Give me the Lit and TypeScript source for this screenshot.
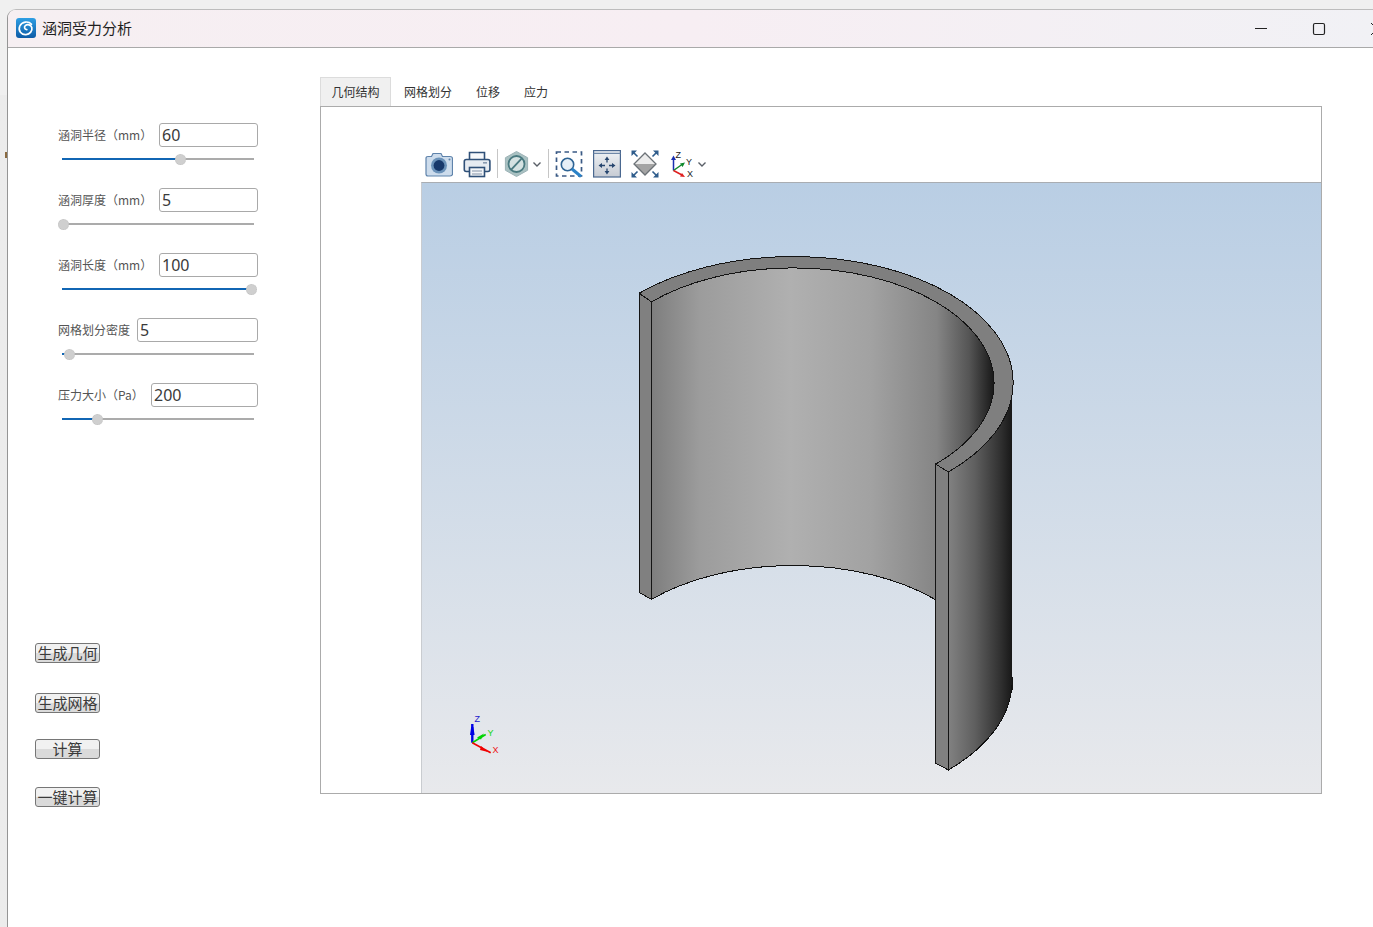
import { LitElement, html, css, svg } from "lit";
import { customElement } from "lit/decorators.js";

const rows = [
  { label: "涵洞半径（mm）", value: "60", input: 99, pos: 118 },
  { label: "涵洞厚度（mm）", value: "5", input: 99, pos: 1 },
  { label: "涵洞长度（mm）", value: "100", input: 99, pos: 189 },
  { label: "网格划分密度", value: "5", input: 121, pos: 7 },
  { label: "压力大小（Pa）", value: "200", input: 107, pos: 35 },
];
const actions = ["生成几何", "生成网格", "计算", "一键计算"];
const tabs = ["几何结构", "网格划分", "位移", "应力"];

const chevron = html`<svg class="chev" viewBox="0 0 10 28"><polyline points="1.5,12.5 5,16 8.5,12.5" fill="none" stroke="#5a6068" stroke-width="1.4"/></svg>`;

@customElement("app-root")
export class AppRoot extends LitElement {
  static styles = css`
    :host {
      display: block;
      width: 1373px;
      height: 927px;
      overflow: hidden;
      font-family: "Noto Sans CJK SC", "Noto Sans", sans-serif;
      background:
        linear-gradient(#8a6a40, #8a6a40) 5px 152px / 2px 6px no-repeat,
        linear-gradient(#f0f0f0, #f0f0f0) 0 0 / 100% 95px no-repeat,
        linear-gradient(to right, #ececec, #cfcfcf);
    }
    .window {
      margin: 9px 0 0 7px;
      height: 918px;
      box-sizing: border-box;
      background: #fff;
      border-top: 1px solid #bdbdbd;
      border-left: 1px solid #959595;
      border-top-left-radius: 9px;
      display: flex;
      flex-direction: column;
      overflow: hidden;
    }
    .title {
      height: 37px;
      flex: none;
      display: flex;
      align-items: center;
      padding-left: 8px;
      overflow: hidden;
      border-bottom: 1px solid #a9a9a9;
      background: linear-gradient(90deg, #f6eff2, #f7eef3 50%, #f1f1f5);
      font-size: 15px;
      color: #1f1f1f;
    }
    .title span { margin-bottom: 3px; }
    .logo { width: 20px; height: 20px; margin: 0 6px 1px 0; flex: none; }
    .controls { margin-left: auto; margin-right: -33px; display: flex; flex: none; }
    .controls svg { width: 58px; height: 14px; display: block; }
    .body { flex: 1; display: flex; }
    .left { width: 312px; flex: none; padding: 75px 0 0 50px; box-sizing: border-box; }
    .row { width: 200px; height: 65px; }
    .field { display: flex; justify-content: space-between; align-items: center; height: 24px; }
    .field label { font-size: 12px; color: #555; white-space: nowrap; line-height: 24px; }
    .field input {
      height: 24px;
      box-sizing: border-box;
      border: 1px solid #a9a9a9;
      border-radius: 3px;
      padding: 0 2px;
      font: 16px "Noto Sans", sans-serif;
      color: #3a3a3a;
      outline: none;
      background: #fff;
    }
    .slider { position: relative; width: 192px; height: 2px; margin: 11px 0 0 4px; background: #ababab; }
    .fill { position: absolute; left: 0; top: 0; height: 2px; background: #1166b4; }
    .thumb {
      position: absolute;
      top: -4px;
      width: 9px;
      height: 9px;
      margin-left: -5px;
      border-radius: 50%;
      background: #cfcfcf;
      border: 1px dotted #c2c2c2;
      box-sizing: content-box;
    }
    .actions { margin: 195px 0 0 -23px; display: flex; flex-direction: column; align-items: flex-start; }
    .actions button {
      width: 65px;
      height: 20px;
      padding: 0;
      box-sizing: border-box;
      border: 1px solid #767676;
      border-radius: 3px;
      background: linear-gradient(#f1f1f1 0 50%, #dadada 50% 100%);
      font: 15px/16px "Noto Sans CJK SC", sans-serif;
      color: #3a3a3a;
      white-space: nowrap;
      overflow: hidden;
    }
    .actions button:nth-child(2) { margin-top: 30px; }
    .actions button:nth-child(3) { margin-top: 26px; }
    .actions button:nth-child(4) { margin-top: 28px; }
    .right { width: 1002px; flex: none; padding-top: 29px; }
    .tabs { display: flex; height: 29px; }
    .tab { width: 72px; box-sizing: border-box; font-size: 12px; color: #333; text-align: center; line-height: 30px; }
    .tab.short { width: 48px; }
    .tab.active { width: 71px; margin-right: 1px; background: #f0f0f0; border: 1px solid #dcdcdc; border-bottom: none; line-height: 28px; }
    .panel {
      height: 688px;
      box-sizing: border-box;
      border: 1px solid #ababab;
      display: flex;
      flex-direction: column;
    }
    .tools { height: 75px; box-sizing: border-box; padding: 0 0 4px 104px; display: flex; align-items: flex-end; gap: 6px; flex: none; }
    .group { display: flex; gap: 10px; align-items: flex-end; }
    .group.tight { gap: 3px; }
    .group.none { gap: 0; }
    .ic { width: 28px; height: 28px; display: block; }
    .ic.hex { width: 25px; }
    .chev { width: 10px; height: 28px; display: block; }
    .sep { width: 1px; height: 29px; background: #c6c6c6; }
    .view { margin-left: 100px; flex: 1; border-left: 1px solid #c9ccd0; border-top: 1px solid #a9adb2; min-height: 0; }
    .view svg { display: block; width: 100%; height: 100%; }
    .lbl { font: 9px "Liberation Sans", sans-serif; }
  `;

  private part() {
    const ia = "200.3 115";
    const oa = "219.3 126";
    return svg`
      <g shape-rendering="crispEdges">
        <path d="M651.3 301.9A${ia} 0 1 1 935.7 464.2V599.7A${ia} 0 0 0 651.3 599.4Z" fill="url(#gi)"/>
        <path d="M948.3 472A${oa} 0 0 0 1012.3 383V680.5A${oa} 0 0 1 948.3 770Z" fill="url(#go)"/>
        <path d="M651.3 599.4A${ia} 0 0 1 935.7 599.7" fill="none" stroke="#111"/>
        <path d="M948.3 770A${oa} 0 0 0 1012 685" fill="none" stroke="#111"/>
        <path d="M639.3 293.1A${oa} 0 1 1 948.3 472L935.7 464.2A${ia} 0 1 0 651.3 301.9Z" fill="#7f7f7f" stroke="#141414"/>
        <path d="M639.5 293.5L651.5 301.9V599.4L639.5 592.7Z" fill="#808080" stroke="#141414"/>
        <path d="M935.7 464.2L948.5 472V770L935.7 763.3Z" fill="#808080" stroke="#141414"/>
        <path d="M1012.4 677V690" stroke="#141414" fill="none"/>
      </g>`;
  }

  private triad() {
    return svg`
      <line x1="472.3" y1="742.7" x2="472.3" y2="724" stroke="#0000e6" stroke-width="2.4"/>
      <path d="M470 735L474.6 735L473.4 727L471.2 727Z" fill="#0000e6"/>
      <line x1="472.3" y1="742.7" x2="485.7" y2="734.5" stroke="#00d400" stroke-width="1.6"/>
      <path d="M477 737.6L484 733.6L481 739.5Z" fill="#00d400"/>
      <line x1="472.3" y1="742.7" x2="490.7" y2="752.7" stroke="#f00000" stroke-width="1.6"/>
      <path d="M481 746L488 752L480 750Z" fill="#f00000"/>
      <text class="lbl" x="474.5" y="722" fill="#1a1acc">Z</text>
      <text class="lbl" x="487.5" y="735.5" fill="#10d810">Y</text>
      <text class="lbl" x="492.5" y="753" fill="#ee1111">X</text>`;
  }

  render() {
    return html`
      <div class="window">
        <div class="title">
          <svg class="logo" viewBox="0 0 20 20">
            <defs><linearGradient id="lg" x1="0" y1="0" x2="0" y2="1"><stop offset="0" stop-color="#2f9fe4"/><stop offset="1" stop-color="#0d5ba6"/></linearGradient></defs>
            <rect width="20" height="20" rx="3" fill="url(#lg)"/>
            <path d="M15.5 6.2C12.5 2.8 6 3.4 3.8 8C1.8 12.6 5.4 17 10 16.6C14 16.2 16.6 12.8 15.8 9.6C15 6.8 11.6 6 9.6 7.4C7.8 8.8 8.4 11.4 10.8 11.6" fill="none" stroke="#fff" stroke-width="1.7" stroke-linecap="round"/>
          </svg>
          <span>涵洞受力分析</span>
          <div class="controls">
            <svg viewBox="0 0 58 14"><line x1="23" x2="35" y1="6.5" y2="6.5" stroke="#222" stroke-width="1"/></svg>
            <svg viewBox="0 0 58 14"><rect x="23.5" y="1.5" width="11" height="11" rx="1.5" fill="none" stroke="#222" stroke-width="1.2"/></svg>
            <svg viewBox="0 0 58 14"><path d="M23 1L35 13M35 1L23 13" fill="none" stroke="#222" stroke-width="1"/></svg>
          </div>
        </div>
        <div class="body">
          <div class="left">
            ${rows.map(
              (r) => html`
                <div class="row">
                  <div class="field">
                    <label>${r.label}</label>
                    <input .value=${r.value} style="width:${r.input}px" />
                  </div>
                  <div class="slider">
                    <div class="fill" style="width:${r.pos}px"></div>
                    <div class="thumb" style="left:${r.pos}px"></div>
                  </div>
                </div>
              `
            )}
            <div class="actions">${actions.map((a) => html`<button>${a}</button>`)}</div>
          </div>
          <div class="right">
            <div class="tabs">
              ${tabs.map((t, i) => html`<div class="tab ${i === 0 ? "active" : t.length === 2 ? "short" : ""}">${t}</div>`)}
            </div>
            <div class="panel">
              <div class="tools">
                <div class="group">
                  <svg class="ic" viewBox="0 0 28 28">
                    <path d="M1 8.5Q1 6.5 3 6.5H6.5L8 3.5H16L17.5 6.5H25Q27.5 6.5 27.5 8.5V24Q27.5 26 25 26H3Q1 26 1 24Z" fill="#cddcec" stroke="#5f83ab" stroke-width="1.2"/>
                    <circle cx="14" cy="15.5" r="8" fill="#6b92b9"/>
                    <circle cx="14" cy="15.5" r="5.4" fill="#17386b"/>
                    <circle cx="24.5" cy="9.5" r="1" fill="#5f83ab"/>
                  </svg>
                  <svg class="ic" viewBox="0 0 28 28">
                    <path d="M6.5 10V2.5H21.5V10" fill="#f6f8fb" stroke="#2f5078" stroke-width="1.6"/>
                    <rect x="1.3" y="9.5" width="25.6" height="12" rx="2" fill="#e6ebf1" stroke="#2f5078" stroke-width="1.6"/>
                    <rect x="20" y="12" width="4" height="1.6" fill="#8a9bb0"/>
                    <rect x="6.5" y="17.5" width="15" height="9" fill="#f3f5f8" stroke="#2f5078" stroke-width="1.6"/>
                    <path d="M9 21H19M9 24H19" stroke="#a9b4c2" stroke-width="1.3"/>
                  </svg>
                </div>
                <div class="sep"></div>
                <div class="group tight">
                  <svg class="ic hex" viewBox="0 0 25 28">
                    <path d="M12.5 1.5L23.6 7.7V20.3L12.5 26.5L1.4 20.3V7.7Z" fill="#a9c1c2" stroke="#9cb2b6"/>
                    <circle cx="12.5" cy="14" r="8" fill="#d5e2e2" stroke="#4a7a80" stroke-width="1.8"/>
                    <line x1="7" y1="19.8" x2="18" y2="8.2" stroke="#4a7a80" stroke-width="1.8"/>
                  </svg>
                  ${chevron}
                </div>
                <div class="sep"></div>
                <div class="group">
                  <svg class="ic" viewBox="0 0 28 28">
                    <rect x="1.5" y="2" width="25" height="24" fill="none" stroke="#3a5a85" stroke-width="1.7" stroke-dasharray="4.5 3.5"/>
                    <circle cx="12.5" cy="14.5" r="6.2" fill="#e6eff7" stroke="#2f6494" stroke-width="1.6"/>
                    <line x1="17" y1="19" x2="26" y2="26.5" stroke="#2a82c8" stroke-width="3"/>
                  </svg>
                  <svg class="ic" viewBox="0 0 28 28">
                    <defs><linearGradient id="fit" x1="0" y1="0" x2="0" y2="1"><stop offset="0" stop-color="#f0f3f6"/><stop offset="1" stop-color="#c6cbd3"/></linearGradient></defs>
                    <rect x="0.6" y="0.6" width="26.8" height="26.4" fill="url(#fit)" stroke="#4a6890" stroke-width="1.2"/>
                    <line x1="0.6" x2="27.4" y1="3.4" y2="3.4" stroke="#6f88a8" stroke-width="1.4"/>
                    <path d="M14 9V12.5M14 18.5V22M9 15.5H12M16 15.5H19" stroke="#27466f" stroke-width="1.3" fill="none"/>
                    <path d="M14 6.5L16.4 10H11.6ZM14 24.5L16.4 21H11.6ZM5.5 15.5L9 13.1V17.9ZM22.5 15.5L19 13.1V17.9Z" fill="#27466f"/>
                  </svg>
                  <svg class="ic" viewBox="0 0 28 28">
                    <path d="M14 3L25 14H3Z" fill="#ececec"/>
                    <path d="M3 14H25L14 25Z" fill="#a4a4a4"/>
                    <path d="M14 3L25 14L14 25L3 14Z" fill="none" stroke="#6c7277" stroke-width="1.3"/>
                    <path d="M6.5 6.5L2 2M21.5 6.5L26 2M6.5 21.5L2 26M21.5 21.5L26 26" stroke="#2f5d8c" stroke-width="1.6"/>
                    <path d="M0.5 0.5H6L0.5 6ZM27.5 0.5H22L27.5 6ZM0.5 27.5H6L0.5 22ZM27.5 27.5H22L27.5 22Z" fill="#2f5d8c"/>
                  </svg>
                  <div class="group none">
                    <svg class="ic" viewBox="0 0 28 28">
                      <line x1="4.5" y1="20.5" x2="4.5" y2="8" stroke="#1a2fb0" stroke-width="1.5"/>
                      <path d="M4.5 5.5L7 10H2Z" fill="#1a2fb0"/>
                      <line x1="4.5" y1="20.5" x2="13" y2="14.5" stroke="#118a2e" stroke-width="1.5"/>
                      <path d="M16 12.5L13.6 17L11 13.5Z" fill="#118a2e"/>
                      <line x1="4.5" y1="20.5" x2="13" y2="25" stroke="#e02020" stroke-width="1.5"/>
                      <path d="M16 27L11 26.4L13 23Z" fill="#e02020"/>
                      <text x="6.5" y="8" font-family="Liberation Sans" font-size="9" fill="#222">Z</text>
                      <text x="17" y="15" font-family="Liberation Sans" font-size="9" fill="#222">Y</text>
                      <text x="18" y="27" font-family="Liberation Sans" font-size="9" fill="#222">X</text>
                    </svg>
                    ${chevron}
                  </div>
                </div>
              </div>
              <div class="view">
                <svg viewBox="422 183 899 610" preserveAspectRatio="none">
                  <defs>
                    <linearGradient id="bg" x1="0" y1="0" x2="0" y2="1">
                      <stop offset="0" stop-color="#b9cee4"/>
                      <stop offset="1" stop-color="#e8e9ec"/>
                    </linearGradient>
                    <linearGradient id="gi" gradientUnits="userSpaceOnUse" x1="652" y1="0" x2="993" y2="0">
                      <stop offset="0" stop-color="#7e7e7e"/>
                      <stop offset="0.14" stop-color="#9c9c9c"/>
                      <stop offset="0.405" stop-color="#b0b0b0"/>
                      <stop offset="0.64" stop-color="#a2a2a2"/>
                      <stop offset="0.835" stop-color="#858585"/>
                      <stop offset="0.93" stop-color="#555"/>
                      <stop offset="1" stop-color="#1a1a1a"/>
                    </linearGradient>
                    <linearGradient id="go" gradientUnits="userSpaceOnUse" x1="948" y1="0" x2="1012" y2="0">
                      <stop offset="0" stop-color="#828282"/>
                      <stop offset="0.42" stop-color="#5f5f5f"/>
                      <stop offset="0.8" stop-color="#333"/>
                      <stop offset="1" stop-color="#181818"/>
                    </linearGradient>
                  </defs>
                  <rect x="422" y="183" width="899" height="610" fill="url(#bg)"/>
                  ${this.part()}
                  ${this.triad()}
                </svg>
              </div>
            </div>
          </div>
        </div>
      </div>
    `;
  }
}
